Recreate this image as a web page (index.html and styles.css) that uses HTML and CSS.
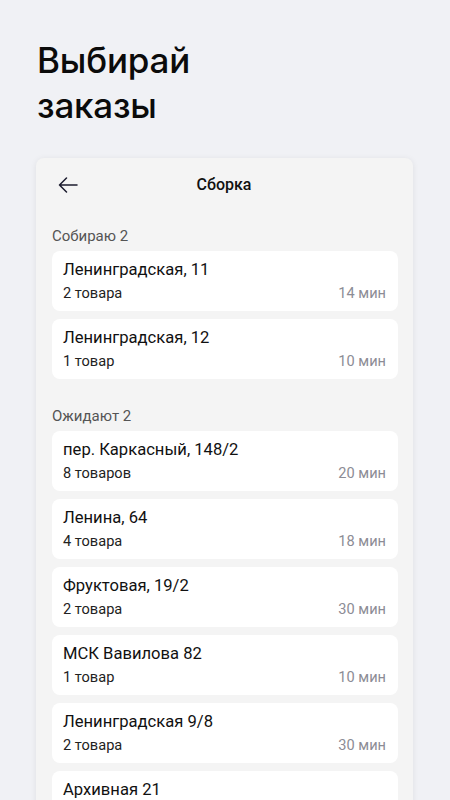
FILE: index.html
```html
<!DOCTYPE html>
<html lang="ru">
<head>
<meta charset="utf-8">
<link rel="stylesheet" href="styles.css">
</head>
<body>
<h1 class="hero">Выбирай<br>заказы</h1>
<div class="panel">
  <div class="header">
    <svg class="back" width="20" height="16" viewBox="0 0 20 16"><path d="M19 8H1.5M8.5 1L1.5 8l7 7" fill="none" stroke="#1b1b2e" stroke-width="1.5" stroke-linecap="round" stroke-linejoin="round"/></svg>
    <div class="htitle">Сборка</div>
  </div>
  <div class="section">
    <div class="label">Собираю 2</div>
    <div class="card"><div class="name">Ленинградская, 11</div><div class="row"><span class="qty">2 товара</span><span class="time">14 мин</span></div></div>
    <div class="card"><div class="name">Ленинградская, 12</div><div class="row"><span class="qty">1 товар</span><span class="time">10 мин</span></div></div>
  </div>
  <div class="section second">
    <div class="label">Ожидают 2</div>
    <div class="card"><div class="name">пер. Каркасный, 148/2</div><div class="row"><span class="qty">8 товаров</span><span class="time">20 мин</span></div></div>
    <div class="card"><div class="name">Ленина, 64</div><div class="row"><span class="qty">4 товара</span><span class="time">18 мин</span></div></div>
    <div class="card"><div class="name">Фруктовая, 19/2</div><div class="row"><span class="qty">2 товара</span><span class="time">30 мин</span></div></div>
    <div class="card"><div class="name">МСК Вавилова 82</div><div class="row"><span class="qty">1 товар</span><span class="time">10 мин</span></div></div>
    <div class="card"><div class="name">Ленинградская 9/8</div><div class="row"><span class="qty">2 товара</span><span class="time">30 мин</span></div></div>
    <div class="card"><div class="name">Архивная 21</div></div>
  </div>
</div>
</body>
</html>
```
FILE: styles.css
```css
html, body {
  margin: 0;
  padding: 0;
  background: #f0f1f5;
  height: 800px;
  overflow: hidden;
  font-family: Roboto, "Noto Sans", sans-serif;
}
.hero {
  margin: 0;
  padding: 38px 0 0 37px;
  font-family: Inter, Roboto, sans-serif;
  font-weight: 500;
  font-size: 35px;
  line-height: 45px;
  color: #0b0b0b;
  letter-spacing: -0.2px;
}
.panel {
  margin: 30px 37px 0 36px;
  background: #f4f4f4;
  border-radius: 8px;
  box-shadow: 0 1px 6px rgba(0, 0, 0, 0.08);
  padding: 0 15px 0 16px;
  height: 700px;
}
.header {
  height: 52px;
  display: flex;
  align-items: center;
  justify-content: center;
  position: relative;
}
.back {
  position: absolute;
  left: 6px;
  top: 19px;
}
.htitle {
  font-size: 16px;
  font-weight: 500;
  color: #111;
  margin-left: -2px;
}
.section {
  display: flex;
  flex-direction: column;
  gap: 8px;
  padding-top: 16px;
}
.section.second {
  padding-top: 27px;
}
.label {
  font-size: 15px;
  line-height: 20px;
  color: #555;
  margin-bottom: -3px;
}
.card {
  background: #fff;
  border-radius: 8px;
  height: 60px;
  box-sizing: border-box;
  padding: 9px 12px 0 11px;
}
.name {
  font-size: 16.6px;
  line-height: 20px;
  color: #111;
}
.row {
  display: flex;
  justify-content: space-between;
  margin-top: 4px;
  font-size: 14.6px;
  line-height: 18px;
}
.qty { color: #222; }
.time { color: #8c8c95; }
```
